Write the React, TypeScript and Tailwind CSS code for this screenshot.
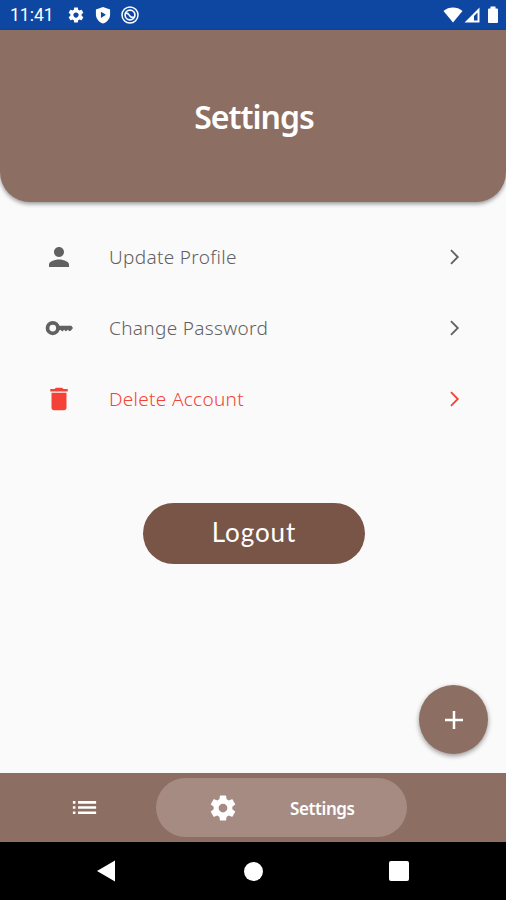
import React from 'react';

const GEAR =
  'M19.43 12.98c.04-.32.07-.64.07-.98s-.03-.66-.07-.98l2.11-1.65c.19-.15.24-.42.12-.64l-2-3.46c-.12-.22-.39-.3-.61-.22l-2.49 1c-.52-.4-1.08-.73-1.69-.98l-.38-2.65C14.460 2.180 14.250 2 14 2h-4c-.25 0-.46.18-.49.42l-.38 2.65c-.61.25-1.170.59-1.690.98l-2.490-1c-.23-.09-.49 0-.61.22l-2 3.460c-.13.22-.07.49.12.64l2.110 1.650c-.04.32-.07.65-.07.98s.03.66.07.98l-2.110 1.650c-.19.15-.24.42-.12.64l2 3.460c.12.22.39.3.61.22l2.490-1c.52.4 1.080.73 1.690.98l.38 2.650c.03.24.24.42.49.42h4c.25 0 .46-.18.49-.42l.38-2.650c.61-.25 1.170-.59 1.690-.98l2.490 1c.23.09.49 0 .61-.22l2-3.460c.12-.22.07-.49-.12-.64l-2.110-1.650zM12 15.500c-1.930 0-3.500-1.570-3.500-3.500s1.570-3.500 3.500-3.500 3.500 1.570 3.500 3.500-1.570 3.500-3.500 3.500z';
const PERSON =
  'M12 12c2.21 0 4-1.79 4-4s-1.79-4-4-4-4 1.79-4 4 1.79 4 4 4zm0 2c-2.67 0-8 1.34-8 4v2h16v-2c0-2.66-5.33-4-8-4z';
const TRASH = 'M6 19c0 1.1.9 2 2 2h8c1.1 0 2-.9 2-2V7H6v12zM19 4h-3.5l-1-1h-5l-1 1H5v2h14V4z';
const LIST =
  'M3 13h2v-2H3v2zm0 4h2v-2H3v2zm0-8h2V7H3v2zm4 4h14v-2H7v2zm0 4h14v-2H7v2zM7 7v2h14V7H7z';

function Icon({ d, className }: { d: string; className: string }) {
  return (
    <svg viewBox="0 0 24 24" className={className} fill="currentColor">
      <path d={d} />
    </svg>
  );
}

function KeyIcon() {
  return (
    <svg viewBox="0 0 24 24" className="size-[30px]">
      <circle cx="7" cy="12" r="4.200" fill="none" stroke="currentColor" strokeWidth="3" />
      <path
        d="M11 10.200h10.800l1.400 1.700-2 2.500h-1l-1.300-1-1.300 1.400-1.500-1.400-1.300 1.400-1.500-1.200H11z"
        fill="currentColor"
      />
    </svg>
  );
}

function StatusBar() {
  return (
    <div className="flex h-[30px] items-center bg-[#0d47a1] text-white">
      <span className="ml-[10px] w-[57px] pt-[2px] font-['Roboto',sans-serif] text-[17.5px] leading-none whitespace-nowrap">
        11:41
      </span>
      <Icon d={GEAR} className="size-[18px]" />
      <svg viewBox="0 0 24 24" className="ml-[8px] size-[20px]">
        <path d="M12 2.500 3.500 5.500v6c0 5 3.600 9.400 8.500 10.700 4.900-1.300 8.500-5.700 8.500-10.700v-6z" fill="white" />
        <path d="M9.500 8v7.500l6-3.700z" fill="#0d47a1" />
      </svg>
      <svg viewBox="0 0 20 20" className="ml-[7px] size-[20px]" fill="none" stroke="white">
        <circle cx="10" cy="10" r="8" strokeWidth="1.500" />
        <circle cx="10" cy="10" r="4.900" strokeWidth="1.700" />
        <path d="M5 8.500c2.500-1.500 3.500.5 4.500 2s2.500 2.500 4.500 1.500" strokeWidth="1.600" />
      </svg>
      <div className="ml-auto mr-[7px] flex items-center">
        <svg viewBox="0 0 20 16" className="h-[16px] w-[20px]">
          <path d="M.5 4C6-.6 14-.6 19.500 4L10 15.500z" fill="white" />
        </svg>
        <svg viewBox="0 0 16 16" className="ml-px h-[16px] w-[16px]">
          <path d="M15.500.5v15H.5zM13.500 5.500 10 9v4.500h3.500z" fill="white" fillRule="evenodd" />
        </svg>
        <svg viewBox="0 0 12 18" className="ml-[7px] h-[18px] w-[12px]">
          <path d="M3.500 0.500h5v2H10q1 0 1 1v12.500q0 1-1 1h-8q-1 0-1-1V3.500q0-1 1-1h1.500z" fill="white" />
        </svg>
      </div>
    </div>
  );
}

function Row({ icon, label, tone, textStyle }: { icon: React.ReactNode; label: string; tone: string; textStyle: string }) {
  return (
    <div className={`flex h-[71.300px] items-center pl-[44px] pr-[45px] ${tone}`}>
      {icon}
      <span className={`ml-[35px] pt-px font-['Noto_Sans',sans-serif] text-[19px] font-[350] leading-none whitespace-nowrap ${textStyle}`}>
        {label}
      </span>
      <svg viewBox="0 0 12 18" className="ml-auto h-[18px] w-[12px]" fill="none" stroke="currentColor">
        <path d="m2 2.200 6.800 6.800L2 15.800" strokeWidth="1.800" />
      </svg>
    </div>
  );
}

export default function App() {
  return (
    <div className="flex h-[900px] w-[506px] flex-col overflow-hidden bg-[#fafafa]">
      <StatusBar />
      <header className="flex h-[172px] items-center justify-center rounded-b-[30px] bg-[#8d6e63] shadow-[0_2px_4px_rgba(0,0,0,0.4)]">
        <h1 className="pt-[2px] pl-[2px] font-['Noto_Sans',sans-serif] text-[32px] font-semibold leading-none tracking-[-1px] text-white">
          Settings
        </h1>
      </header>
      <main className="relative flex flex-1 flex-col items-center">
        <div className="w-full pt-[19px]">
          <Row
            icon={<Icon d={PERSON} className="size-[30px]" />}
            label="Update Profile"
            tone="text-[#616161]"
            textStyle="tracking-[0.32px]"
          />
          <Row icon={<KeyIcon />} label="Change Password" tone="text-[#616161]" textStyle="tracking-[0.32px]" />
          <Row
            icon={<Icon d={TRASH} className="size-[30px]" />}
            label="Delete Account"
            tone="text-[#f44336]"
            textStyle="tracking-[0.3px]"
          />
        </div>
        <button className="mt-[68px] ml-[2px] flex h-[61px] w-[222px] items-center justify-center rounded-full bg-[#795548] pb-[2px] font-['Lato',sans-serif] text-[26px] leading-none tracking-[0.9px] text-white">
          Logout
        </button>
        <button
          aria-label="Add"
          className="absolute right-[18px] bottom-[19px] flex size-[69px] items-center justify-center rounded-full bg-[#8d6e63] text-white shadow-[0_2px_5px_rgba(0,0,0,0.4)]"
        >
          <svg viewBox="0 0 18 18" className="size-[18px]" stroke="white" strokeWidth="2.500">
            <path d="M9 0v18M0 9h18" />
          </svg>
        </button>
      </main>
      <nav className="flex h-[69px] items-center bg-[#8d6e63] text-white">
        <div className="flex w-[156px] justify-center pl-[13px]">
          <Icon d={LIST} className="size-[31px]" />
        </div>
        <div className="flex h-[59px] w-[251px] items-center rounded-full bg-[#a58b82] pl-[52px]">
          <Icon d={GEAR} className="size-[30px]" />
          <span className="ml-[52px] pt-px font-['Noto_Sans',sans-serif] text-[17px] font-semibold leading-none tracking-[-0.4px]">
            Settings
          </span>
        </div>
      </nav>
      <div className="flex h-[58px] items-center bg-black">
        <svg viewBox="0 0 18 22" className="ml-[97px] h-[22px] w-[18px]">
          <path d="M18 .5v21L0 11z" fill="white" />
        </svg>
        <div className="ml-[129px] size-[19px] rounded-full bg-white" />
        <div className="ml-[126px] size-[20px] rounded-[2px] bg-white" />
      </div>
    </div>
  );
}
